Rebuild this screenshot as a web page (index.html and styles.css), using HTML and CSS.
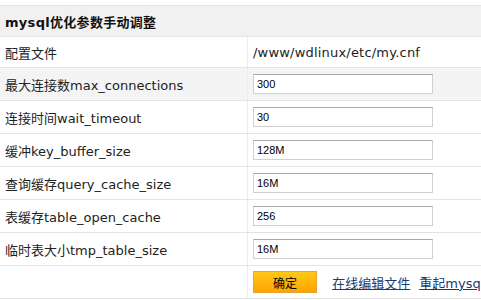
FILE: index.html
```html
<!DOCTYPE html>
<html>
<head>
    <title>mysql优化参数手动调整</title>
    <meta charset="utf-8">
    <link rel="stylesheet" href="styles.css">
</head>
<body>

<div id="page-wrapper">
    <table class="params">
        <tr class="head">
            <td colspan="2">mysql优化参数手动调整</td>
        </tr>
        <tr class="text-row">
            <td class="label">配置文件</td>
            <td class="value path">/www/wdlinux/etc/my.cnf</td>
        </tr>
        <tr class="input-row hover">
            <td class="label">最大连接数max_connections</td>
            <td class="value"><input type="text" class="field" value="300"></td>
        </tr>
        <tr class="input-row">
            <td class="label">连接时间wait_timeout</td>
            <td class="value"><input type="text" class="field" value="30"></td>
        </tr>
        <tr class="input-row">
            <td class="label">缓冲key_buffer_size</td>
            <td class="value"><input type="text" class="field" value="128M"></td>
        </tr>
        <tr class="input-row">
            <td class="label">查询缓存query_cache_size</td>
            <td class="value"><input type="text" class="field" value="16M"></td>
        </tr>
        <tr class="input-row">
            <td class="label">表缓存table_open_cache</td>
            <td class="value"><input type="text" class="field" value="256"></td>
        </tr>
        <tr class="input-row">
            <td class="label">临时表大小tmp_table_size</td>
            <td class="value"><input type="text" class="field" value="16M"></td>
        </tr>
        <tr class="input-row">
            <td class="label"></td>
            <td class="value actions">
                <input type="button" class="button" value="确定">
                <a href="#" class="link">在线编辑文件</a>
                <a href="#" class="link">重起mysql</a>
            </td>
        </tr>
    </table>
</div>

</body>
</html>
```

FILE: styles.css
```css
html, body {
    margin: 0px;
    padding: 0px;
    background-color: white;
    overflow: hidden;
}

#page-wrapper {
    padding-top: 5px;
    width: 560px;
}

.params {
    width: 100%;
    border-collapse: collapse;
    font-family: "DejaVu Sans", "Noto Sans CJK SC", sans-serif;
    font-size: 13px;
    color: #222222;
    border-top: 1px solid #e4e4e4;
}

.params td {
    padding: 0px 5px;
    border-bottom: 1px solid #e4e4e4;
    white-space: nowrap;
}

.head td {
    height: 30px;
    background-color: #f1f1f1;
    font-weight: bold;
    color: #111111;
    letter-spacing: 0.3px;
}

.text-row td {
    height: 30px;
}

.input-row td {
    height: 32px;
}

.hover td {
    background-color: #f4f4f4;
}

.label {
    width: 237px;
    border-right: 1px solid #ececec;
}

.path {
    letter-spacing: 0.2px;
}

.field {
    width: 180px;
    height: 20px;
    box-sizing: border-box;
    margin: 0px;
    padding: 1px 3px;
    border: 1px solid #d0d0d0;
    border-top-color: #a8a8a8;
    font-family: "Liberation Sans", sans-serif;
    font-size: 11px;
    color: #000000;
    vertical-align: middle;
}

.actions {
    padding-top: 3px;
}

.button {
    width: 64px;
    height: 22px;
    margin: 0px 11px 0px 0px;
    padding: 0px;
    border: 1px solid #e3a52e;
    background: linear-gradient(#ffc81a, #ffa400);
    font-family: "Noto Sans CJK SC", sans-serif;
    font-size: 12px;
    color: #000000;
    vertical-align: middle;
}

.link {
    margin-right: 5px;
    color: #1b3b6f;
    text-decoration: underline;
    vertical-align: middle;
}
```
